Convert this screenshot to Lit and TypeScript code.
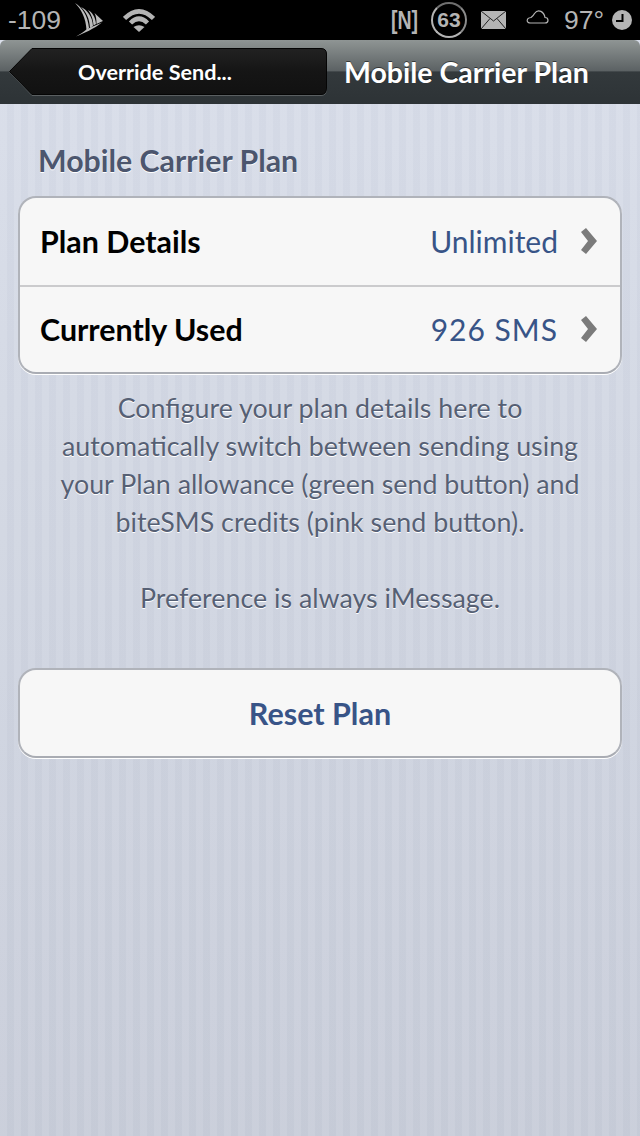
import { LitElement, html, css } from "lit";
import { customElement } from "lit/decorators.js";

@customElement("app-root")
export class AppRoot extends LitElement {
  static styles = css`
    :host {
      display: block;
      width: 640px;
      height: 1136px;
      overflow: hidden;
      font-family: Lato, "Noto Sans", sans-serif;
      background-color: #d0d5e0;
      background-image: repeating-linear-gradient(90deg, rgba(255, 255, 255, 0.05) 0 7px, rgba(120, 130, 150, 0.03) 7px 14px),
        linear-gradient(180deg, #d9deea 0%, #c8cdd9 100%);
    }
    .status {
      height: 40px;
      background: #000;
      color: #b4b4b4;
      display: flex;
      align-items: center;
      font-size: 26.5px;
      padding: 0 8px;
      box-sizing: border-box;
      font-family: "Liberation Sans", sans-serif;
    }
    .status .signal { width: 28px; height: 34px; margin-left: 14px; }
    .status .wifi { width: 32px; height: 24px; margin-left: 20px; margin-top: -1px; }
    .status .spacer { flex: 1; }
    .status .n {
      display: inline-block;
      font-size: 26px;
      font-weight: 700;
      margin-right: 13px;
      transform: scaleX(0.75);
      transform-origin: right center;
    }
    .ring {
      width: 36px;
      height: 36px;
      box-sizing: border-box;
      border: 2px solid #b4b4b4;
      border-top-color: #6f6f6f;
      border-right-color: #8c8c8c;
      border-radius: 50%;
      display: flex;
      align-items: center;
      justify-content: center;
      font-size: 21px;
      font-weight: 700;
      margin-right: 14px;
    }
    .status .mail { width: 25px; height: 18px; margin-right: 20px; }
    .status .cloud { width: 23px; height: 15px; margin-right: 15px; margin-top: -8px; }
    .status .temp { margin-right: 8px; }
    .status .clock { width: 20px; height: 20px; margin-top: -1px; }
    .nav {
      height: 64px;
      border-radius: 6px 6px 0 0;
      background: linear-gradient(180deg, #8f9594 0%, #5c6264 48%, #33393c 50%, #2d3336 100%);
      display: flex;
      align-items: center;
    }
    .back {
      width: 320px;
      height: 48px;
      margin-left: 8px;
      position: relative;
      display: flex;
      align-items: center;
      color: #fff;
      font-size: 21.6px;
      font-weight: 700;
      padding-left: 70px;
      box-sizing: border-box;
    }
    .back svg { position: absolute; left: 0; top: 0; }
    .back span { position: relative; }
    .title {
      margin-left: 16px;
      color: #fff;
      font-size: 28.5px;
      font-weight: 700;
      text-shadow: 0 -1px 0 rgba(0, 0, 0, 0.5);
      white-space: nowrap;
    }
    .content {
      padding: 37px 18px 0;
    }
    .heading {
      margin: 0 0 17px 20px;
      font-size: 30.3px;
      line-height: 38px;
      font-weight: 700;
      color: #4c566e;
      text-shadow: 0 1px 0 #fff;
    }
    .group {
      background: #f7f7f7;
      border: 2px solid #b0b3ba;
      border-bottom-color: #a9acb3;
      border-radius: 18px;
      box-shadow: 0 1px 0 #fff;
    }
    .row {
      height: 87px;
      display: flex;
      align-items: center;
      padding: 0 22px 2px 20px;
      box-sizing: border-box;
    }
    .row + .row { border-top: 2px solid #cbcbcd; }
    .label { font-size: 30.4px; font-weight: 700; color: #000; flex: 1; }
    .value { font-size: 30px; color: #385487; margin-right: 22px; }
    .value.num { letter-spacing: 1px; }
    .chev { width: 18px; height: 26px; }
    .note {
      margin: 15px 30px 0;
      text-align: center;
      font-size: 26.8px;
      line-height: 38px;
      color: #566074;
      text-shadow: 0 1px 0 #fff;
    }
    .note p { margin: 0 0 38px; }
    .reset {
      margin-top: 51px;
      height: 86px;
      display: flex;
      align-items: center;
      justify-content: center;
      font-size: 30.5px;
      font-weight: 700;
      color: #385487;
    }
  `;

  private chevron() {
    return html`<svg class="chev" viewBox="0 0 18 26"><path d="M1 4 L6 0 L17 13 L6 26 L1 22 L8 13 Z" fill="#7b7b7b"/></svg>`;
  }

  render() {
    return html`
      <div class="status">
        <span>-109</span>
        <svg class="signal" viewBox="0 0 28 34" fill="#bcbcbc">
          <path d="M0 0 C7 4 13 13 14 25 L11.5 27 C11 15 6 6 0 0 Z"/>
          <path d="M6 4 C12 7 17.5 13 18 23 L15 25 C14.5 15 11 9 6 4 Z"/>
          <path d="M13 7 C17 9 20.5 14 21 21 L18.5 22.5 C18 15 16 11 13 7 Z"/>
          <path d="M19.5 10 L28 18 L21.5 21 C21.5 16 21 13 19.5 10 Z"/>
          <path d="M1 33.5 C9 30 19 26 27 19.5 L12 26 C9 29 5 31 1 33.5 Z"/>
        </svg>
        <svg class="wifi" viewBox="0 0 32 24" fill="none" stroke="#b4b4b4" stroke-width="4.5">
          <path d="M1.5 10.5 Q16 -4 30.5 10.5"/>
          <path d="M7.5 15 Q16 6.5 24.5 15"/>
          <path d="M10.5 19 Q16 15.5 21.5 19 L16 24 Z" fill="#b4b4b4" stroke="none"/>
        </svg>
        <span class="spacer"></span>
        <span class="n">[N]</span>
        <span class="ring">63</span>
        <svg class="mail" viewBox="0 0 25 18">
          <rect width="25" height="18" fill="#b4b4b4"/>
          <path d="M0 0 L12.5 10 L25 0 M0 18 L9 7.5 M25 18 L16 7.5" stroke="#222" fill="none" stroke-width="1"/>
        </svg>
        <svg class="cloud" viewBox="0 0 23 15" fill="none" stroke="#b4b4b4" stroke-width="1.2">
          <path d="M4.5 14 H19 C23 14 23 8.5 19 8.5 C18 3 12.5 -1 8.5 4.5 C7.5 6.5 6.5 7.5 5 8.5 C0 9 0 14 4.5 14 Z"/>
        </svg>
        <span class="temp">97°</span>
        <svg class="clock" viewBox="0 0 20 20">
          <circle cx="10" cy="10" r="10" fill="#b4b4b4"/>
          <path d="M10.5 4 V11 H4" stroke="#000" stroke-width="2" fill="none"/>
        </svg>
      </div>
      <div class="nav">
        <div class="back">
          <svg width="320" height="48" viewBox="0 0 320 48">
            <defs>
              <linearGradient id="bk" x1="0" y1="0" x2="0" y2="1">
                <stop offset="0" stop-color="#222"/>
                <stop offset="0.5" stop-color="#151515"/>
                <stop offset="1" stop-color="#111"/>
              </linearGradient>
            </defs>
            <path d="M24 1.5 H313 Q318.5 1.5 318.5 7 V41 Q318.5 47.5 313 47.5 H24 L1.5 24 Z" fill="none" stroke="#5a5f61" stroke-width="1"/>
            <path d="M24 0.5 H313 Q318.5 0.5 318.5 6 V40 Q318.5 46.5 313 46.5 H24 L1.5 23.5 Z" fill="url(#bk)" stroke="#050505"/>
          </svg>
          <span>Override Send...</span>
        </div>
        <div class="title">Mobile Carrier Plan</div>
      </div>
      <div class="content">
        <h2 class="heading">Mobile Carrier Plan</h2>
        <div class="group">
          <div class="row"><span class="label">Plan Details</span><span class="value">Unlimited</span>${this.chevron()}</div>
          <div class="row"><span class="label">Currently Used</span><span class="value num">926 SMS</span>${this.chevron()}</div>
        </div>
        <div class="note">
          <p>Configure your plan details here to automatically switch between sending using your Plan allowance (green send button) and biteSMS credits (pink send button).</p>
          <p>Preference is always iMessage.</p>
        </div>
        <div class="group reset">Reset Plan</div>
      </div>
    `;
  }
}
